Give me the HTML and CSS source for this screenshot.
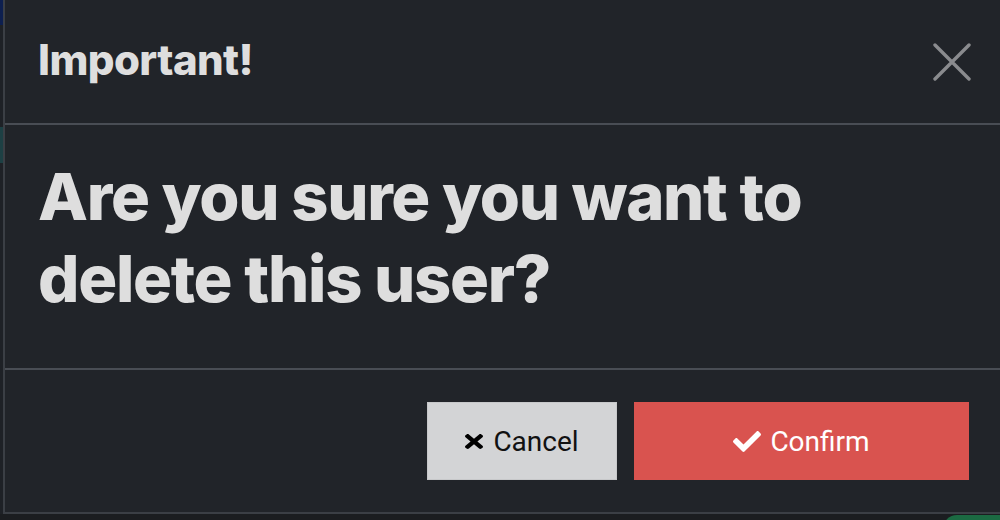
FILE: index.html
```html
<!DOCTYPE html>
<html>
<head>
<meta charset="utf-8">
<link rel="stylesheet" href="styles.css">
</head>
<body>
<div class="page">
  <div class="strip">
    <div class="seg-blue"></div>
    <div class="seg-dark"></div>
    <div class="seg-teal"></div>
  </div>
  <div class="modal">
    <div class="modal-header">
      <h2 class="title">Important!</h2>
      <button class="close" aria-label="Close">
        <svg width="38" height="38" viewBox="0 0 38 38"><path d="M2 2 L36 36 M36 2 L2 36" stroke="#8a8b8e" stroke-width="3.4" stroke-linecap="round" fill="none"/></svg>
      </button>
    </div>
    <div class="modal-body">
      <p class="question">Are you sure you want to delete this user?</p>
    </div>
    <div class="modal-footer">
      <button class="btn btn-cancel">
        <svg class="ico-x" width="18" height="15" viewBox="0 80 352 352" preserveAspectRatio="none"><path d="M242.72 256l100.07-100.07c12.28-12.28 12.28-32.19 0-44.48l-22.240-22.24c-12.28-12.28-32.19-12.28-44.48 0L176 189.28 75.93 89.21c-12.28-12.28-32.19-12.28-44.48 0L9.21 111.45c-12.28 12.28-12.28 32.19 0 44.48L109.28 256 9.21 356.07c-12.28 12.28-12.28 32.19 0 44.48l22.24 22.24c12.28 12.28 32.2 12.28 44.48 0L176 322.72l100.070 100.07c12.28 12.28 32.2 12.28 44.48 0l22.24-22.24c12.28-12.28 12.28-32.19 0-44.48L242.72 256z" fill="#000"/></svg>
        Cancel
      </button>
      <button class="btn btn-confirm">
        <svg class="ico-check" width="28" height="21" viewBox="0 65 512 382"><path d="M173.898 439.404l-166.4-166.4c-9.997-9.997-9.997-26.206 0-36.204l36.203-36.204c9.997-9.998 26.207-9.998 36.204 0L192 312.69 432.095 72.596c9.997-9.997 26.207-9.997 36.204 0l36.203 36.204c9.997 9.997 9.997 26.206 0 36.204l-294.4 294.401c-9.998 9.997-26.207 9.997-36.204-.001z" fill="#fff"/></svg>
        Confirm
      </button>
    </div>
  </div>
  <div class="green-pill"></div>
</div>
</body>
</html>
```

FILE: styles.css
```css
* { box-sizing: border-box; }
html, body {
  margin: 0;
  padding: 0;
  width: 1000px;
  height: 520px;
  overflow: hidden;
  background: #1b1d20;
}
.page {
  position: relative;
  display: flex;
  width: 1000px;
  height: 520px;
}
.strip {
  width: 3px;
  height: 514px;
  display: flex;
  flex-direction: column;
  background: #1e2126;
}
.seg-blue { height: 25px; background: #0d1f4f; }
.seg-dark { height: 102px; }
.seg-teal { height: 36px; background: #1d4044; }
.modal {
  flex: 1;
  height: 514px;
  background: #212429;
  border-left: 2px solid #3b3f45;
  border-bottom: 2px solid #3b3f45;
  display: flex;
  flex-direction: column;
}
.modal-header {
  height: 125px;
  border-bottom: 2px solid #494d54;
  display: flex;
  align-items: center;
  justify-content: space-between;
  padding: 0 29px 4px 33px;
}
.title {
  margin: 0;
  font-family: Inter, "Noto Sans", sans-serif;
  font-weight: 800;
  font-size: 42px;
  color: #dedede;
  letter-spacing: -0.6px;
}
.close {
  background: none;
  border: 0;
  padding: 0;
  width: 38px;
  height: 38px;
  display: block;
  margin-top: 4px;
}
.close svg { display: block; }
.modal-body {
  height: 245px;
  border-bottom: 2px solid #494d54;
  padding: 31px 33px 0 33px;
}
.question {
  margin: 0;
  font-family: Inter, "Noto Sans", sans-serif;
  font-weight: 800;
  font-size: 65px;
  line-height: 82px;
  color: #dedede;
  letter-spacing: -1.3px;
}
.modal-footer {
  flex: 1;
  display: flex;
  align-items: center;
  justify-content: flex-end;
  gap: 17px;
  padding: 0 31px 0 33px;
}
.btn {
  height: 78px;
  border: 0;
  display: flex;
  align-items: center;
  justify-content: center;
  gap: 10px;
  font-family: Roboto, "Liberation Sans", sans-serif;
  font-size: 28px;
  padding: 0;
}
.btn svg { display: block; }
.btn-cancel {
  width: 190px;
  background: #d3d4d6;
  color: #111;
  border: 1px solid #c7c8ca;
}
.btn-confirm {
  width: 335px;
  background: #d9534f;
  color: #fff;
  gap: 9px;
}
.green-pill {
  position: absolute;
  left: 943px;
  top: 515px;
  width: 80px;
  height: 30px;
  border-radius: 14px;
  background: #1b6a42;
}
```
